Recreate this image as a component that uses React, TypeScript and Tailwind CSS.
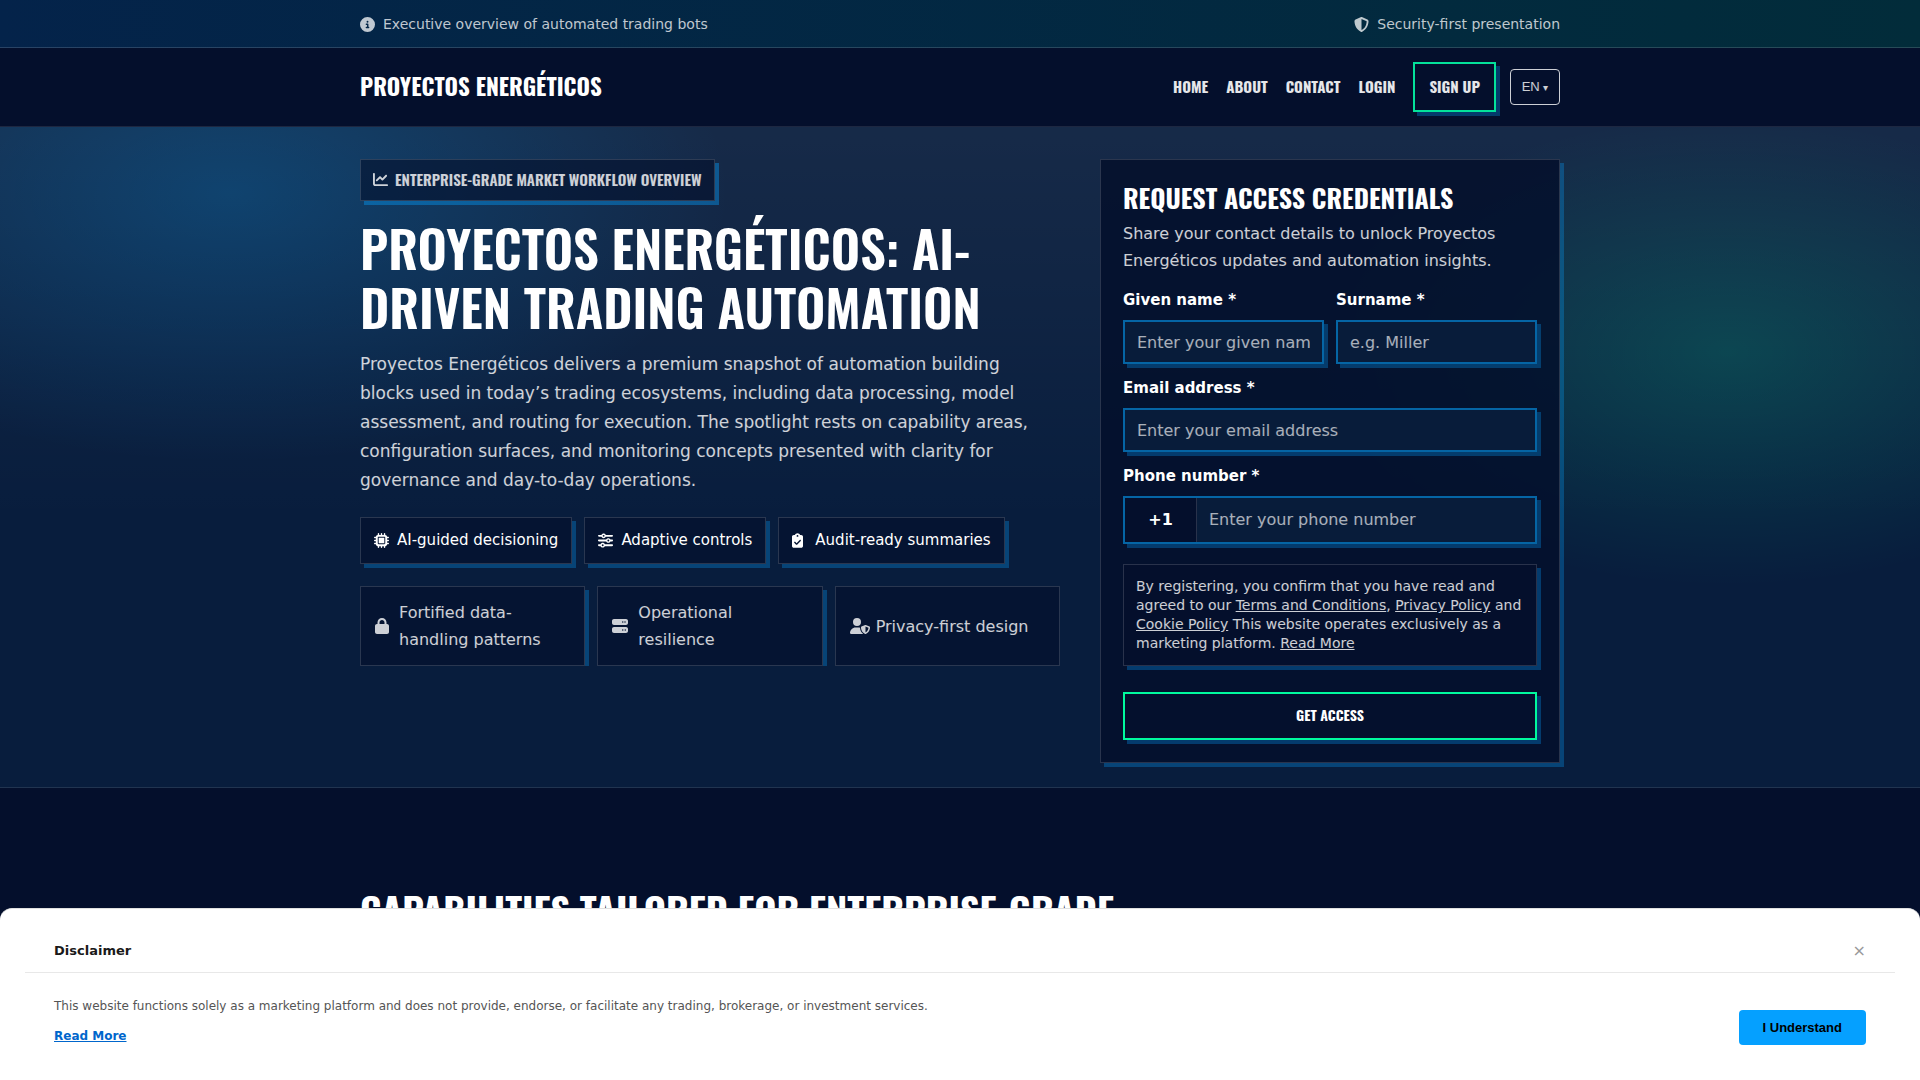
import { useState } from "react";
import type { ReactNode } from "react";
import {
  FaChartLine,
  FaCircleInfo,
  FaClipboardCheck,
  FaLock,
  FaMicrochip,
  FaServer,
  FaShieldHalved,
  FaSliders,
  FaUserShield,
} from "react-icons/fa6";

const navLinks = ["Home", "About", "Contact", "Login"];

const chips = [
  { icon: <FaMicrochip className="size-[15px]" />, text: "AI-guided decisioning" },
  { icon: <FaSliders className="size-[15px]" />, text: "Adaptive controls" },
  { icon: <FaClipboardCheck className="h-[15px] w-[11px]" />, text: "Audit-ready summaries" },
];

const assurances = [
  { icon: <FaLock className="h-4 w-[14px]" />, box: "w-[14px]", text: "Fortified data-handling patterns" },
  { icon: <FaServer className="size-4" />, box: "w-4", text: "Operational resilience" },
  { icon: <FaUserShield className="h-4 w-5 shrink-0" />, box: "w-4", text: "Privacy-first design" },
];

function Container({ children, className = "" }: { children: ReactNode; className?: string }) {
  return <div className={`mx-auto w-full max-w-[1200px] ${className}`}>{children}</div>;
}

function TopBar() {
  return (
    <div className="border-b border-white/15 bg-linear-to-r from-[#04234a] to-[#022c3a] pt-[13px] pb-[11px]">
      <Container className="flex items-center justify-between text-sm leading-[23px] text-white/75">
        <span className="flex items-center gap-2">
          <FaCircleInfo className="size-[15px]" />
          Executive overview of automated trading bots
        </span>
        <span className="flex items-center gap-2">
          <FaShieldHalved className="size-[15px]" />
          Security-first presentation
        </span>
      </Container>
    </div>
  );
}

function Header() {
  return (
    <header className="border-b border-white/10 bg-[#040f2c] py-[14px]">
      <Container className="flex items-center justify-between font-['Oswald','Roboto_Condensed',sans-serif] font-bold uppercase">
        <a href="#home" className="pb-0.5 text-[23px] text-white">
          Proyectos Energéticos
        </a>
        <div className="flex items-center gap-[14px]">
          <nav className="flex items-center gap-[18px] text-[15px] text-white/90">
            {navLinks.map((link) => (
              <a key={link} href={`#${link.toLowerCase()}`} className="pb-0.5">
                {link}
              </a>
            ))}
            <a
              href="#signup"
              className="border-2 border-[#04e19a] px-[14px] pt-[11px] pb-[13px] leading-[22px] shadow-[4px_4px_0_#05a0ff4d]"
            >
              Sign up
            </a>
          </nav>
          <button
            type="button"
            aria-haspopup="listbox"
            className="h-9 w-[50px] rounded border border-white/80 font-['Liberation_Sans',Arial,sans-serif] text-[13px] font-normal text-white/80"
          >
            EN <span className="text-[10px]">▾</span>
          </button>
        </div>
      </Container>
    </header>
  );
}

function Field({
  id,
  label,
  placeholder,
  type = "text",
}: {
  id: string;
  label: string;
  placeholder: string;
  type?: string;
}) {
  return (
    <div className="flex min-w-0 flex-col gap-[6px]">
      <label htmlFor={id} className="text-[15px] leading-7 font-bold text-white">
        {label}
      </label>
      <input
        id={id}
        type={type}
        placeholder={placeholder}
        className="h-11 w-full border-2 border-[#0565a5] bg-[#081c3a] px-3 text-base text-white shadow-[4px_4px_0_#05a0ff4d] placeholder:text-white/65"
      />
    </div>
  );
}

function AccessForm() {
  return (
    <form
      className="border border-white/15 bg-[#040f2c]/85 p-[22px] shadow-[4px_4px_0_#05a0ff4d]"
      onSubmit={(event) => event.preventDefault()}
    >
      <h2 className="font-['Oswald','Roboto_Condensed',sans-serif] text-[26px] leading-8 font-bold text-white uppercase">
        Request access credentials
      </h2>
      <p className="mt-[6px] leading-[27px] text-white/80">
        Share your contact details to unlock Proyectos Energéticos updates and automation insights.
      </p>
      <div className="mt-3 flex flex-col gap-[10px]">
        <div className="grid grid-cols-2 gap-3">
          <Field id="given-name" label="Given name *" placeholder="Enter your given name" />
          <Field id="surname" label="Surname *" placeholder="e.g. Miller" />
        </div>
        <Field id="email" type="email" label="Email address *" placeholder="Enter your email address" />
        <div className="flex flex-col gap-[6px]">
          <label htmlFor="phone" className="text-[15px] leading-7 font-bold text-white">
            Phone number *
          </label>
          <div className="flex h-12 border-2 border-[#0565a5] bg-[#081c3a] shadow-[4px_4px_0_#05a0ff4d]">
            <span className="flex w-[72px] shrink-0 items-center justify-center border-r border-white/15 bg-[#040f2c] font-bold text-white">
              +1
            </span>
            <input
              id="phone"
              type="tel"
              placeholder="Enter your phone number"
              className="min-w-0 flex-1 bg-transparent px-3 text-base text-white placeholder:text-white/65"
            />
          </div>
        </div>
      </div>
      <p className="mt-5 border border-white/15 bg-[#040f2c] p-3 text-sm leading-[19px] text-white/80 shadow-[4px_4px_0_#05a0ff4d]">
        By registering, you confirm that you have read and agreed to our{" "}
        <a href="#terms" className="underline">
          Terms and Conditions
        </a>
        ,{" "}
        <a href="#privacy" className="underline">
          Privacy Policy
        </a>{" "}
        and{" "}
        <a href="#cookies" className="underline">
          Cookie Policy
        </a>{" "}
        This website operates exclusively as a marketing platform.{" "}
        <a href="#more" className="underline">
          Read More
        </a>
      </p>
      <button
        type="submit"
        className="mt-[26px] h-12 w-full border-2 border-[#00fa9e] bg-[#04102d] pb-0.5 font-['Oswald','Roboto_Condensed',sans-serif] text-sm font-bold text-white uppercase shadow-[4px_4px_0_#05a0ff4d]"
      >
        Get access
      </button>
    </form>
  );
}

function Hero() {
  return (
    <section className="border-b border-white/10 bg-[#081d3d] bg-[radial-gradient(500px_270px_at_12%_10%,#00a3ff38,#00a3ff00),radial-gradient(420px_235px_at_90%_34%,#00ffa329,#00ffa300),linear-gradient(#ffffff0f,#ffffff00_60%)] bg-no-repeat pt-8 pb-6">
      <Container className="grid items-start gap-10 lg:grid-cols-[1fr_460px]">
        <div>
          <p className="inline-flex items-center gap-[7px] border border-white/15 bg-[#040f2c]/60 px-3 pt-2 pb-[10px] font-['Oswald','Roboto_Condensed',sans-serif] text-[15px] leading-[22px] font-semibold text-white/80 uppercase shadow-[4px_4px_0_#05a0ff66]">
            <FaChartLine className="size-[15px]" />
            Enterprise-grade market workflow overview
          </p>
          <h1 className="mt-[17px] font-['Oswald','Roboto_Condensed',sans-serif] text-[51px] leading-[59px] font-semibold text-white uppercase">
            Proyectos Energéticos: AI-driven trading automation
          </h1>
          <p className="mt-[14px] max-w-[680px] text-[17px] leading-[29px] text-white/80">
            Proyectos Energéticos delivers a premium snapshot of automation building blocks used in today’s trading
            ecosystems, including data processing, model assessment, and routing for execution. The spotlight rests on
            capability areas, configuration surfaces, and monitoring concepts presented with clarity for governance and
            day-to-day operations.
          </p>
          <ul className="mt-[22px] flex flex-wrap gap-3">
            {chips.map((chip) => (
              <li
                key={chip.text}
                className="flex items-center gap-2 border border-white/15 bg-[#040f2c]/60 px-[13px] py-[11px] text-[15px] leading-[23px] text-white shadow-[4px_4px_0_#05a0ff4d]"
              >
                <span className="flex w-[15px]">{chip.icon}</span>
                {chip.text}
              </li>
            ))}
          </ul>
          <ul className="mt-[22px] grid grid-cols-3 gap-3 overflow-hidden">
            {assurances.map((item) => (
              <li
                key={item.text}
                className="flex items-center gap-[10px] border border-white/15 bg-[#040f2c]/60 px-[14px] py-3 leading-[27px] text-white/80 shadow-[4px_4px_0_#05a0ff4d]"
              >
                <span className={`flex shrink-0 ${item.box}`}>{item.icon}</span>
                <span>{item.text}</span>
              </li>
            ))}
          </ul>
        </div>
        <AccessForm />
      </Container>
    </section>
  );
}

function Disclaimer({ onClose }: { onClose: () => void }) {
  return (
    <div
      role="dialog"
      aria-label="Disclaimer"
      className="fixed inset-x-0 bottom-0 rounded-t-xl border-t border-[#e0e0e0] bg-white px-[25px] pb-[35px]"
    >
      <div className="flex items-center justify-between border-b border-[#e8e8e8] px-[29px] pt-[30px] pb-[9px] leading-5">
        <h3 className="text-[13px] font-bold text-[#1a1a1a]">Disclaimer</h3>
        <button type="button" aria-label="Close" onClick={onClose} className="text-base text-[#999999]">
          ×
        </button>
      </div>
      <div className="flex items-end justify-between gap-8 px-[29px] pt-6">
        <div className="flex flex-col items-start gap-3 text-xs leading-[18px]">
          <p className="text-[#555555]">
            This website functions solely as a marketing platform and does not provide, endorse, or facilitate any
            trading, brokerage, or investment services.
          </p>
          <a href="#disclaimer" className="font-bold text-[#0066cc] underline">
            Read More
          </a>
        </div>
        <button
          type="button"
          onClick={onClose}
          className="h-[35px] shrink-0 rounded bg-[#05a0ff] px-6 font-['Liberation_Sans',Arial,sans-serif] text-[13px] font-bold text-black"
        >
          I Understand
        </button>
      </div>
    </div>
  );
}

export default function App() {
  const [showDisclaimer, setShowDisclaimer] = useState(true);
  return (
    <div className="min-h-screen bg-[#040f2c] font-['DejaVu_Sans',sans-serif] text-base">
      <TopBar />
      <Header />
      <main>
        <Hero />
        <section className="pt-24 pb-40">
          <Container>
            <h2 className="font-['Oswald','Roboto_Condensed',sans-serif] text-[38px] leading-[50px] font-bold text-white uppercase">
              Capabilities tailored for enterprise-grade
            </h2>
          </Container>
        </section>
      </main>
      {showDisclaimer && <Disclaimer onClose={() => setShowDisclaimer(false)} />}
    </div>
  );
}
